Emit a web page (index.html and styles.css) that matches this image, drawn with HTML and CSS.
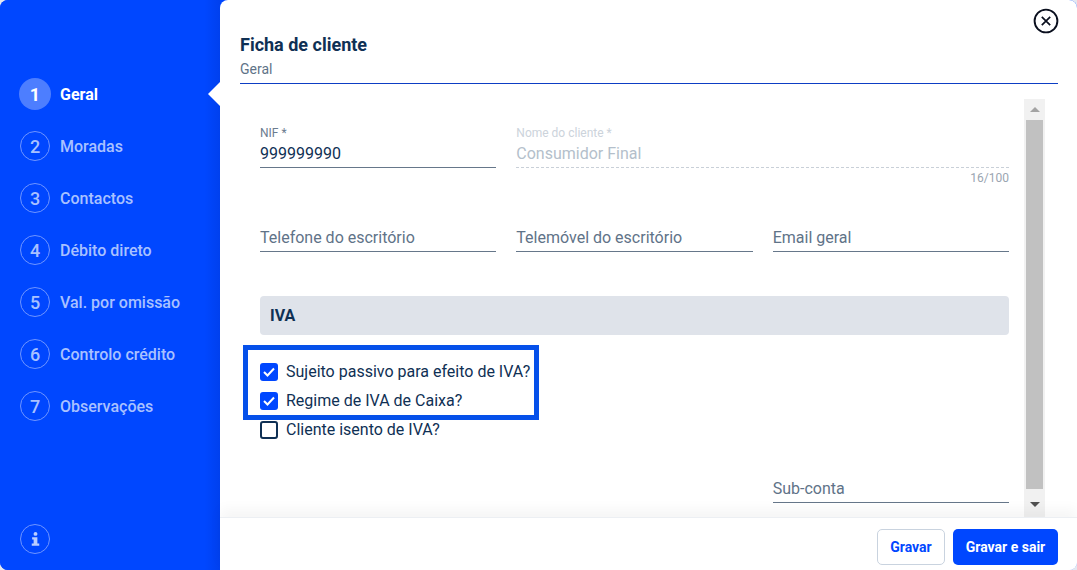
FILE: index.html
```html
<!DOCTYPE html>
<html lang="pt">
<head>
  <meta charset="UTF-8">
  <title>Ficha de cliente</title>
  <link rel="stylesheet" href="styles.css">
</head>
<body>
  <div class="modal">
    <nav class="steps">
      <ul class="step-list">
        <li class="step active"><span class="step-num">1</span>Geral</li>
        <li class="step"><span class="step-num">2</span>Moradas</li>
        <li class="step"><span class="step-num">3</span>Contactos</li>
        <li class="step"><span class="step-num">4</span>Débito direto</li>
        <li class="step"><span class="step-num">5</span>Val. por omissão</li>
        <li class="step"><span class="step-num">6</span>Controlo crédito</li>
        <li class="step"><span class="step-num">7</span>Observações</li>
      </ul>
      <span class="info-btn">
        <svg width="12" height="20" viewBox="0 0 12 20"><circle cx="6" cy="3.2" r="2.6" fill="#b9cdff"/><path d="M1.5 7.5h7v8.5h2.5v3H1v-3h2.5v-5.5h-2z" fill="#b9cdff"/></svg>
      </span>
    </nav>

    <main class="panel">
      <button class="close-btn" aria-label="Fechar">
        <svg width="26" height="26" viewBox="0 0 26 26" fill="none" stroke="#0a0f1e"><circle cx="13" cy="13" r="11.4" stroke-width="1.9"/><path d="M8.8 8.8l8.4 8.4M17.2 8.8l-8.4 8.4" stroke-width="1.7"/></svg>
      </button>

      <header class="panel-head">
        <h1>Ficha de cliente</h1>
        <p>Geral</p>
      </header>

      <div class="scroll-area">
        <div class="form">
          <div class="row row-top">
            <div class="field">
              <label>NIF *</label>
              <div class="value">999999990</div>
            </div>
            <div class="field disabled span-2">
              <label>Nome do cliente *</label>
              <div class="value">Consumidor Final</div>
              <small>16/100</small>
            </div>
          </div>

          <div class="row row-contacts">
            <div class="field empty"><div class="value">Telefone do escritório</div></div>
            <div class="field empty"><div class="value">Telemóvel do escritório</div></div>
            <div class="field empty"><div class="value">Email geral</div></div>
          </div>

          <h2 class="section-title">IVA</h2>

          <div class="checks">
            <div class="check on">
              <span class="box"><svg width="12" height="10" viewBox="0 0 12 10" fill="none" stroke="#fff" stroke-width="2"><path d="M1 5l3.5 3.5L11 1.5"/></svg></span>
              Sujeito passivo para efeito de IVA?
            </div>
            <div class="check on">
              <span class="box"><svg width="12" height="10" viewBox="0 0 12 10" fill="none" stroke="#fff" stroke-width="2"><path d="M1 5l3.5 3.5L11 1.5"/></svg></span>
              Regime de IVA de Caixa?
            </div>
            <div class="check">
              <span class="box"></span>
              Cliente isento de IVA?
            </div>
            <div class="highlight"></div>
          </div>

          <div class="row row-sub">
            <div class="field empty col-3"><div class="value">Sub-conta</div></div>
          </div>
        </div>

        <div class="scrollbar">
          <span class="arrow up"></span>
          <span class="thumb"></span>
          <span class="arrow down"></span>
        </div>
      </div>

      <footer class="panel-foot">
        <button class="btn btn-light">Gravar</button>
        <button class="btn btn-primary">Gravar e sair</button>
      </footer>
    </main>
  </div>
</body>
</html>
```

FILE: styles.css
```css
* {
  box-sizing: border-box;
}

html, body {
  height: 100%;
}

body {
  margin: 0;
  background-color: #e4e8f0;
  font-family: Roboto, 'Liberation Sans', sans-serif;
  color: #0f3054;
  overflow: hidden;
}

.modal {
  display: flex;
  height: 570px;
  background-color: #0047ff;
  border-radius: 8px;
  overflow: hidden;
}

/* Barra lateral */
.steps {
  width: 220px;
  flex-shrink: 0;
  display: flex;
  flex-direction: column;
  justify-content: space-between;
  padding: 78px 0 16px 19px;
  background: linear-gradient(90deg, #0047ff 93%, #0040ee);
}

.step-list {
  list-style: none;
  margin: 0;
  padding: 0;
}

.step {
  position: relative;
  display: flex;
  align-items: center;
  height: 32px;
  margin-bottom: 20px;
  font-size: 16px;
  font-weight: 500;
  color: #a9c1ff;
}

.step-num {
  display: flex;
  align-items: center;
  justify-content: center;
  width: 30px;
  height: 30px;
  margin: 0 10px 0 1px;
  border: 1px solid #6f95ff;
  border-radius: 50%;
  font-size: 18px;
  font-weight: 500;
}

.step.active {
  color: #fff;
  font-weight: 700;
}

.step.active .step-num {
  width: 32px;
  height: 32px;
  margin: 0 9px 0 0;
  border: none;
  background-color: #4d7eff;
  font-weight: 700;
}

.step.active::after {
  content: "";
  position: absolute;
  right: 0;
  top: 4px;
  border: 12px solid transparent;
  border-left: none;
  border-right-color: #fff;
}

.info-btn {
  display: flex;
  align-items: center;
  justify-content: center;
  width: 30px;
  height: 30px;
  margin-left: 1px;
  border: 1px solid #6f95ff;
  border-radius: 50%;
}

.info-btn svg {
  width: 9px;
  height: 16px;
}

/* Painel */
.panel {
  position: relative;
  flex: 1;
  display: flex;
  flex-direction: column;
  min-width: 0;
  background-color: #fff;
  border-radius: 8px 0 0 8px;
}

.close-btn {
  position: absolute;
  top: 8px;
  right: 18px;
  width: 26px;
  height: 26px;
  padding: 0;
  border: none;
  background: none;
}

.panel-head {
  margin: 0 19px 0 20px;
  padding-top: 34px;
  height: 84px;
  border-bottom: 1px solid #0d3ec4;
}

.panel-head h1 {
  margin: 0;
  font-size: 18px;
  line-height: 21px;
  font-weight: 700;
}

.panel-head p {
  margin: 6px 0 0;
  font-size: 14px;
  line-height: 16px;
  color: #5f7388;
}

.scroll-area {
  flex: 1;
  display: flex;
  min-height: 0;
  padding: 15px 32px 0 40px;
  overflow: hidden;
}

.form {
  flex: 1;
  min-width: 0;
  padding-right: 15px;
}

.row {
  display: grid;
  grid-template-columns: repeat(3, 1fr);
  column-gap: 20px;
}

.row-top {
  height: 125px;
  padding-top: 27px;
}

.span-2 {
  grid-column: span 2;
}

.col-3 {
  grid-column: 3;
}

.row-contacts {
  height: 72px;
}

.field {
  position: relative;
}

.field label {
  display: block;
  font-size: 12px;
  line-height: 14px;
  color: #6b7c8f;
}

.field .value {
  height: 28px;
  padding-top: 4px;
  border-bottom: 1px solid #66778a;
  font-size: 16px;
  line-height: 20px;
}

.field small {
  display: block;
  margin-top: 3px;
  text-align: right;
  font-size: 12px;
  line-height: 14px;
  color: #9aa5b1;
}

.field.disabled label {
  color: #ccd3db;
}

.field.disabled .value {
  color: #b4bfcb;
  border-bottom: 1px dashed #c9d0d8;
}

.field.empty .value {
  color: #5f7388;
}

.section-title {
  height: 39px;
  margin: 0 0 22px;
  padding: 0 10px;
  background-color: #dfe3ea;
  border-radius: 4px;
  font-size: 16px;
  line-height: 39px;
  font-weight: 700;
}

.checks {
  position: relative;
  height: 118px;
}

.check {
  display: flex;
  align-items: center;
  height: 29px;
  font-size: 16px;
}

.box {
  display: flex;
  align-items: center;
  justify-content: center;
  width: 18px;
  height: 18px;
  margin-right: 8px;
  border: 2px solid #0f3054;
  border-radius: 3px;
}

.check.on .box {
  border: none;
  background-color: #0047ff;
}

.highlight {
  position: absolute;
  left: -17px;
  top: -12px;
  width: 296px;
  height: 75px;
  border: 5px solid #0550ea;
}

.row-sub {
  height: 40px;
}

/* Scrollbar */
.scrollbar {
  width: 21px;
  display: flex;
  flex-direction: column;
  align-items: center;
  background-color: #f1f1f1;
}

.thumb {
  flex: 1;
  width: 17px;
  margin-bottom: 7px;
  background-color: #c1c1c1;
}

.arrow {
  height: 21px;
  display: flex;
  align-items: center;
  justify-content: center;
}

.arrow.down {
  padding-bottom: 4px;
}

.arrow::before {
  content: "";
  border-left: 5px solid transparent;
  border-right: 5px solid transparent;
}

.arrow.up::before {
  border-bottom: 5px solid #a3a3a3;
}

.arrow.down::before {
  border-top: 5px solid #505050;
}

/* Pie */
.panel-foot {
  position: relative;
  display: flex;
  justify-content: flex-end;
  gap: 8px;
  height: 53px;
  padding: 11px 19px 0 0;
  background-color: #fff;
  border-top: 1px solid #eceff3;
  box-shadow: 0 -8px 12px rgba(0,0,0,0.04);
}

.btn {
  height: 36px;
  padding: 0;
  border-radius: 5px;
  font-family: inherit;
  font-size: 14px;
  font-weight: 700;
}

.btn-light {
  width: 68px;
  background-color: #fff;
  border: 1px solid #c9d3df;
  color: #0047ff;
}

.btn-primary {
  width: 105px;
  background-color: #0047ff;
  border: none;
  color: #fff;
}
```
